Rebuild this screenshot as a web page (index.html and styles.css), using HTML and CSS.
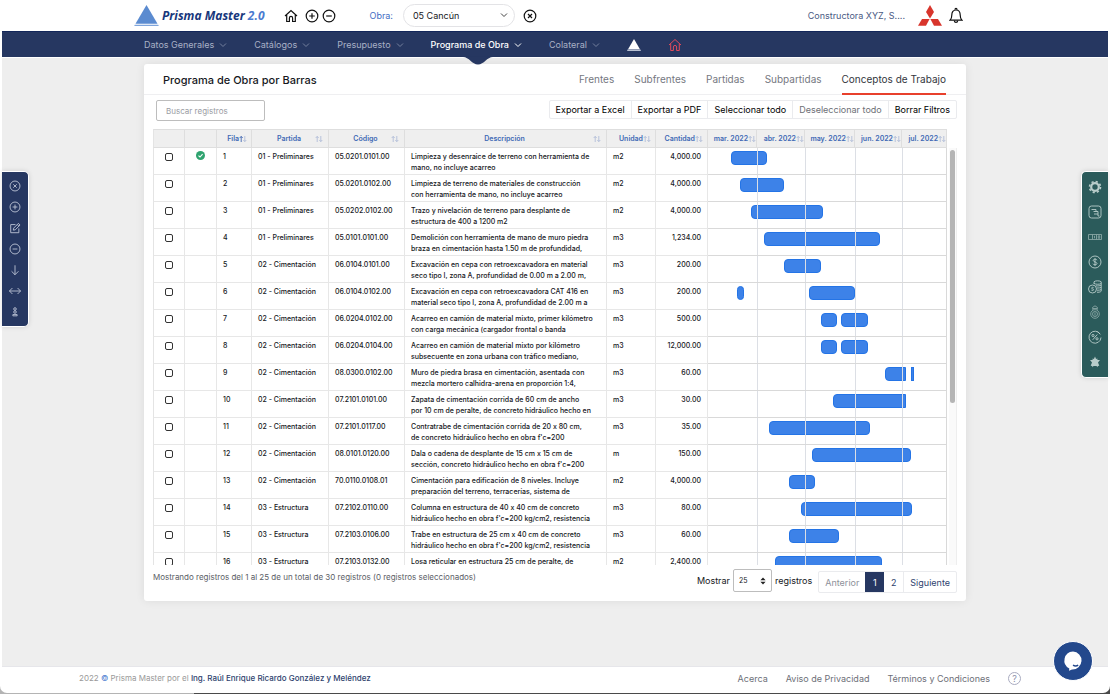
FILE: index.html
```html
<!DOCTYPE html>
<html lang="es">
<head>
<meta charset="utf-8">
<title>Prisma Master 2.0</title>
<link rel="stylesheet" href="styles.css">
</head>
<body>
<svg class="sprite" aria-hidden="true">
  <symbol id="chev" viewBox="0 0 8 8"><path d="M1 2.5 4 5.5 7 2.5"/></symbol>
  <symbol id="home" viewBox="0 0 14 14"><path d="M1 7 7 1.5 13 7M2.7 5.8V12.5H5.4V9a1.6 1.6 0 0 1 3.2 0v3.5h2.7V5.8"/></symbol>
  <symbol id="plus" viewBox="0 0 14 14"><circle cx="7" cy="7" r="5.8"/><path d="M4.2 7h5.6M7 4.2v5.6"/></symbol>
  <symbol id="minus" viewBox="0 0 14 14"><circle cx="7" cy="7" r="5.8"/><path d="M4.2 7h5.6"/></symbol>
  <symbol id="cross" viewBox="0 0 14 14"><circle cx="7" cy="7" r="5.8"/><path d="M5 5l4 4M9 5l-4 4"/></symbol>
  <symbol id="sort" viewBox="0 0 8 8"><path class="sort-up" d="M2.2 7V1.5M.7 3 2.2 1.4 3.7 3"/><path d="M5.8 1v5.5M4.3 5 5.8 6.6 7.3 5"/></symbol>
</svg>
<div class="app">
  <header class="top">
    <div class="container top-row">
      <a class="brand" href="#">
        <svg class="brand-mark" viewBox="0 0 25 22"><path d="M12.5 0 23.5 18.7h-22z" fill="#5b8bd0"/><path d="M.8 19.8h23.4l.6 1.3H.2z" fill="#7fa5dc"/></svg>
        <span>Prisma Master <em>2.0</em></span>
      </a>
      <div class="quick">
        <button class="icon-btn" aria-label="Inicio"><svg class="ic14"><use href="#home"/></svg></button>
        <button class="icon-btn" aria-label="Agregar"><svg class="ic14"><use href="#plus"/></svg></button>
        <button class="icon-btn" aria-label="Quitar"><svg class="ic14"><use href="#minus"/></svg></button>
      </div>
      <label class="obra-label" for="obra">Obra:</label>
      <div class="obra-select">
        <select id="obra"><option>05 Cancún</option></select>
        <svg class="ic8"><use href="#chev"/></svg>
      </div>
      <button class="icon-btn" aria-label="Cerrar obra"><svg class="ic14"><use href="#cross"/></svg></button>
      <span class="company">Constructora XYZ, S....</span>
      <svg class="company-mark" viewBox="0 0 24 21"><path d="M12 0l4 7-4 6.6L8 7z"/><path d="M4 14h7.6L8 20.8H0z"/><path d="M20 14h-7.600L16 20.800h8z"/></svg>
      <button class="icon-btn" aria-label="Notificaciones"><svg class="bell" viewBox="0 0 14 17"><path d="M1 13.200h12c-1.600-1.200-1.800-2.400-1.800-5.200C11.200 5 9.800 3 7 3S2.800 5 2.800 8c0 2.800-.2 4-1.800 5.200z"/><path d="M5.300 13.600c.2 2.400 3.200 2.400 3.400 0M6 2.800c0-2 2-2 2 0"/></svg></button>
    </div>
  </header>
  <nav class="menu" aria-label="Principal">
    <div class="container menu-row">
      <a href="#">Datos Generales <svg class="ic8"><use href="#chev"/></svg></a>
      <a href="#">Catálogos <svg class="ic8"><use href="#chev"/></svg></a>
      <a href="#">Presupuesto <svg class="ic8"><use href="#chev"/></svg></a>
      <a href="#" class="active">Programa de Obra <svg class="ic8"><use href="#chev"/></svg>
        <svg class="notch" viewBox="0 0 30 8"><path d="M0 0C6 0 9 7.500 15 7.500S24 0 30 0z"/></svg></a>
      <a href="#">Colateral <svg class="ic8"><use href="#chev"/></svg></a>
      <a href="#" aria-label="Prisma"><svg class="tri" viewBox="0 0 14 12"><path d="M7 0l5.800 10H1.200z" fill="#fff"/><path d="M.8 10.200h12.400L14 12H0z" fill="#b9c1d2"/></svg></a>
      <a href="#" class="red" aria-label="Portada"><svg class="ic14"><use href="#home"/></svg></a>
    </div>
  </nav>
  <main>
    <section class="card container">
      <div class="card-head">
        <h1>Programa de Obra por Barras</h1>
        <div class="tabs" role="tablist">
          <button role="tab">Frentes</button>
          <button role="tab">Subfrentes</button>
          <button role="tab">Partidas</button>
          <button role="tab">Subpartidas</button>
          <button role="tab" class="on" aria-selected="true">Conceptos de Trabajo</button>
        </div>
      </div>
      <div class="tools">
        <input class="search" type="text" placeholder="Buscar registros" aria-label="Buscar registros">
        <div class="group">
          <button>Exportar a Excel</button><button>Exportar a PDF</button><button>Seleccionar todo</button><button class="dim">Deseleccionar todo</button><button>Borrar Filtros</button>
        </div>
      </div>
      <div class="grid-wrap">
        <table>
          <colgroup><col class="c-tick"><col class="c-tick"><col class="c-row"><col class="c-part"><col class="c-code"><col><col class="c-unit"><col class="c-qty"><col class="m1"><col class="m2"><col class="m3"><col class="m4"><col class="m5"></colgroup>
          <thead><tr id="head"></tr></thead>
          <tbody id="rows"></tbody>
        </table>
        <div class="rail"><div class="thumb"></div></div>
      </div>
      <div class="card-foot">
        <p class="info">Mostrando registros del 1 al 25 de un total de 30 registros (0 registros seleccionados)</p>
        <div class="length">
          <label for="len">Mostrar</label>
          <span class="len-box"><select id="len"><option>25</option></select><svg viewBox="0 0 6 8"><path d="M3 .5 5.600 3.200H.4zM3 7.500.4 4.800h5.200z"/></svg></span>
          <span>registros</span>
        </div>
        <div class="pages">
          <button class="dim">Anterior</button><button class="cur">1</button><button class="num">2</button><button>Siguiente</button>
        </div>
      </div>
    </section>
  </main>
  <footer>
    <p>2022 <b>©</b> Prisma Master por el <a href="#">Ing. Raúl Enrique Ricardo González y Meléndez</a></p>
    <div class="links">
      <a href="#">Acerca</a><a href="#">Aviso de Privacidad</a><a href="#">Términos y Condiciones</a>
      <a href="#" class="help" aria-label="Ayuda">?</a>
    </div>
  </footer>
</div>
<aside class="dock left">
  <button aria-label="Cancelar"><svg viewBox="0 0 14 14"><use href="#cross"/></svg></button>
  <button aria-label="Nuevo"><svg viewBox="0 0 14 14"><use href="#plus"/></svg></button>
  <button aria-label="Editar"><svg viewBox="0 0 14 14"><path d="M7.500 3H2v9.500h9.500V7.500M5 9.500l.4-2.300L11 1.600l1.900 1.900-5.600 5.600zM9.700 3l1.800 1.800"/></svg></button>
  <button aria-label="Eliminar"><svg viewBox="0 0 14 14"><use href="#minus"/></svg></button>
  <button aria-label="Bajar"><svg viewBox="0 0 14 14"><path d="M7 1.500v11M3 8.500l4 4 4-4"/></svg></button>
  <button aria-label="Ancho"><svg viewBox="0 0 14 14"><path d="M.5 7h13M4 3.500.500 7 4 10.500M10 3.500 13.500 7 10 10.500"/></svg></button>
  <button aria-label="Agrupar"><svg viewBox="0 0 14 14"><circle cx="7" cy="3.500" r="1.500"/><circle cx="7" cy="7" r="1.500"/><path d="M4.500 11.500V10h5v1.500z"/></svg></button>
</aside>
<aside class="dock right">
  <button aria-label="Configuración"><svg viewBox="0 0 14 14"><circle cx="7" cy="7" r="3.800" stroke-width="2.200"/><circle cx="7" cy="7" r="5.500" stroke-width="1.600" stroke-dasharray="2.160 2.160"/></svg></button>
  <button aria-label="Programa"><svg viewBox="0 0 14 14"><rect x="1" y="1" width="12" height="12" rx="2.500"/><path d="M3.500 4.500H8v2h2v2.500M5.500 6.500H8M6 9h4v2h1.500"/></svg></button>
  <button aria-label="Billetes" class="faint"><svg viewBox="0 0 14 14"><path d="M.5 4.500h13v5H.5zM4.500 4.500v5M8.500 4.500v5M6.500 5.800v2.500M10.300 5.800h1.400v2.500h-1.400z"/></svg></button>
  <button aria-label="Costo"><svg viewBox="0 0 14 14"><circle cx="7" cy="7" r="6"/><path d="M9 5.200C8.600 3.700 5 3.800 5.200 5.500S9 6.800 9 8.500 5.300 10.300 5 8.700M7 3.200v7.600"/></svg></button>
  <button aria-label="Monedas"><svg viewBox="0 0 14 14"><circle cx="4.500" cy="9" r="4"/><path d="M5.600 7.800c-.5-.8-2.200-.5-2 .4s2 .6 2 1.500-1.500 1-2.200.4M6 4V1.800C7 .5 12 .5 13.200 1.800v9.400c-.8 1-3 1.200-4.200 1M6 3.500c2 1 5.500 1 7.200 0M8 5.800c2 .3 4 0 5.200-.6M9 8c1.600.1 3.200-.1 4.200-.6M9 10.200c1.600.1 3.200-.1 4.200-.6"/></svg></button>
  <button aria-label="Anticipo" class="faint"><svg viewBox="0 0 14 14"><circle cx="7" cy="9" r="4.300"/><circle cx="7" cy="9" r="2.500"/><path d="M5 5 4.500 2.500 7 .8l2.500 1.700L9 5M5 3.500h4M7 7.500v3"/></svg></button>
  <button aria-label="Porcentaje"><svg viewBox="0 0 14 14"><path d="M12.200 4.200A6 6 0 1 0 13 7.500M9.500 1.600l2.700 2.600"/><circle cx="5" cy="5.500" r="1.100"/><circle cx="9" cy="8.800" r="1.100"/><path d="M9.300 4.500l-4.600 5.300"/></svg></button>
  <button aria-label="Favorito"><svg viewBox="0 0 14 14"><path class="solid" d="M7 1.500l1.200 2.800 1-1 .3 1.600L12 5l-2 2.500 1.300 3.300-1.500.2-.3 1.300-1-1.300H5.500l-1 1.300-.3-1.300-1.500-.2L4 7.500 2 5l2.500-.1.300-1.600 1 1z"/></svg></button>
</aside>
<button class="chat" aria-label="Chat"><svg viewBox="0 0 20 20"><path fill="#fff" d="M10 .5a9 9 0 1 1-1 18l-3 1.300.3-2.300A9 9 0 0 1 10 .500z"/><path class="smile" d="M10 14.200c1.600.9 3.600.9 5.200 0"/></svg></button>
<script src="app.js"></script>
</body>
</html>
```
FILE: styles.css
```css
* { box-sizing: border-box; }
html { background: linear-gradient(to right, #b4b4b4 194px, #4a4a4a 194px); }
body { margin: 0; font-family: Inter, "Open Sans", sans-serif; font-variant-ligatures: no-contextual; font-size: 9px; color: #16181d; }
button, input, select { font: inherit; color: inherit; margin: 0; padding: 0; background: none; border: 0; appearance: none; }
a { color: inherit; text-decoration: none; }
p, h1 { margin: 0; }
svg { fill: none; stroke: currentColor; flex: none; display: block; }
.sprite { position: absolute; width: 0; height: 0; }
.sort-up { stroke: var(--up, currentColor); }
.ic14 { width: 14px; height: 14px; }
.ic8 { width: 8px; height: 8px; }
.app { display: flex; flex-direction: column; height: calc(100vh - 1px); padding: 0 2px; background: #fff; border-radius: 0 0 7px 7px; overflow: hidden; }
.container { width: 100%; max-width: 822px; margin: 0 auto; }

.top { height: 31px; flex: none; }
.top-row { display: flex; align-items: center; height: 100%; }
.brand { display: flex; align-items: center; gap: 3px; margin-left: -10px; font: italic 700 12px "Open Sans", sans-serif; color: #17377c; }
.brand em { color: #4a7bd0; }
.brand-mark { width: 25px; height: 22px; stroke: none; }
.quick { display: flex; gap: 3px; margin: 0 31px 0 19px; }
.quick .icon-btn:first-child { margin-right: 4px; }
.icon-btn { color: #111; }
.icon-btn svg { stroke-width: 1.2; }
.obra-label { color: #3f6fc4; }
.obra-select { position: relative; width: 112px; margin: 0 8px 0 10px; }
.obra-select select { width: 100%; height: 23px; padding: 0 9px; border: 1px solid #e3e3e6; border-radius: 12px; }
.obra-select svg { position: absolute; right: 7px; top: 7px; color: #444; }
.company { margin-left: auto; color: #4a5a83; }
.company-mark { width: 24px; height: 21px; margin: 0 7px 0 13px; fill: #d8352c; stroke: none; }
.bell { width: 14px; height: 17px; }
.top .icon-btn:last-child { margin-right: 3px; }

.menu { flex: none; height: 26px; background: #263761; border-top: 1px solid #12265a; color: #a9b1c6; }
.menu-row { display: flex; align-items: center; gap: 27px; height: 100%; }
.menu-row a { position: relative; display: flex; align-items: center; gap: 5px; height: 100%; }
.menu-row .ic8 { opacity: .6; }
.menu-row .active { color: #fff; font-weight: 500; }
.menu-row .active .ic8 { opacity: 1; }
.menu-row .red { color: #e04a5c; }
.menu .notch { position: absolute; z-index: 2; left: calc(50% - 13px); top: 100%; width: 30px; height: 8px; fill: #263761; stroke: none; }
.tri { width: 14px; height: 12px; stroke: none; }

main { flex: 1; min-height: 0; margin-top: 1px; padding-top: 6px; background: #eee; }
.card { background: #fff; border-radius: 3px; box-shadow: 0 0 10px #00000014; }
.card-head { display: flex; justify-content: space-between; height: 31px; padding: 0 20px 0 19px; border-bottom: 1px solid #efeff1; }
h1 { font-size: 11px; font-weight: 500; line-height: 32px; }
.tabs { display: flex; gap: 20px; font-size: 10px; color: #75787f; }
.tabs button { height: 31px; border-bottom: 2px solid transparent; }
.tabs .on { color: #33363d; border-color: #e8402c; }
.tools { display: flex; justify-content: space-between; align-items: flex-start; padding: 5px 9px 8px 12px; }
.search { width: 109px; height: 21px; padding: 0 9px; border: 1px solid #bdbdbd; border-radius: 2px; font-size: 8px; }
.search::placeholder { color: #9a9ca3; opacity: 1; }
.group, .pages { display: flex; border: 1px solid #eaebee; border-radius: 2px; }
.group button { height: 17px; padding: 0 6px; color: #000; }
.group button + button { border-left: 1px solid #eaebee; }
.group .dim { color: #6d6f76; }

.grid-wrap { display: grid; grid-template-columns: 1fr 10px; height: calc(100vh - 258px); margin: 0 9px; overflow: hidden; }
table { width: 100%; table-layout: fixed; border-collapse: separate; border-spacing: 0; font-size: 7px; font-weight: 500; line-height: 11px; align-self: start; }
.c-tick { width: 32px; }
.c-row { width: 35px; }
.c-part { width: 77px; }
.c-code { width: 76px; }
.c-unit { width: 49px; }
.c-qty { width: 52px; }
.m1 { width: 49px; }
.m2 { width: 48px; }
.m3 { width: 50px; }
.m4 { width: 47px; }
.m5 { width: 45px; }
th { height: 19px; padding: 0 0 0 4px; background: #efefef; border: 0 solid #dedede; border-width: 1px 1px 1px 0; color: #4069b5; font-weight: 600; }
th:first-child, td:first-child { border-left: 1px solid #e4e4e4; }
.th-in { display: flex; align-items: center; justify-content: flex-end; white-space: nowrap; }
.th-in svg { width: 8px; height: 8px; stroke-width: .8; color: #a9b8d6; }
.near { padding-right: 4px; }
.wide { padding-right: 5px; }
.wide .th-in span { flex: 1; padding-left: 7px; text-align: center; }
.sorted { --up: #2c57aa; }
td { height: 27px; padding: 3px 6px 1px; vertical-align: top; border: 0 solid #e7e7e7; border-width: 0 1px 1px 0; }
.desc { height: 22px; overflow: hidden; white-space: nowrap; }
.qty { text-align: right; }
.tick { text-align: center; }
.tick input { width: 8px; height: 8px; margin-top: 2px; border: 1px solid #333; border-radius: 2px; vertical-align: top; }
.ok { width: 9px; height: 9px; margin: 0 auto; stroke: none; }
.plan { position: relative; padding: 3px 0 0; border-color: #d9d9d9; }
.track { display: flex; height: 14px; margin-right: -1px; }
.bar { background: #3d82e8; border: 1px solid #2474e6; border-radius: 4px; flex: none; }
.bar.cut { border-top-right-radius: 0; border-bottom-right-radius: 0; }
.bar.thin { border-radius: 0; }
.marks { position: absolute; inset: 0 -1px 0 0; display: grid; grid-template-columns: 49fr 48fr 50fr 47fr 45fr; }
.marks i + i { border-left: 1px solid #dcdfe5; }
.rail { margin: 19px 0 0 2px; padding: 2px 1px; background: #fafafa; border-right: 1px solid #eee; }
.thumb { width: 5px; height: 61%; background: #b5b5b5; border-radius: 3px; }
.rail .thumb { height: 59%; }

.card-foot { display: flex; align-items: flex-start; padding: 4px 9px 8px; }
.info { margin-right: auto; line-height: 16px; font-size: 8px; color: #5b5e66; }
.length { display: flex; align-items: center; gap: 3px; }
.len-box { position: relative; }
.len-box select { width: 39px; height: 23px; padding: 0 5px; border: 1px solid #bdbdbd; border-radius: 2px; font-size: 7px; display: block; }
.len-box svg { position: absolute; right: 6px; top: 8px; width: 6px; height: 8px; fill: #222; stroke: none; }
.pages { margin: 2px 0 0 6px; color: #2e3f6e; }
.pages button { height: 20px; padding: 0 6px; }
.pages button:last-child { border-left: 1px solid #eaebee; }
.pages .dim { color: #8e9199; }
.pages .cur { width: 19px; background: #263761; color: #fff; }
.pages .num { width: 19px; }

footer { flex: none; display: flex; justify-content: space-between; align-items: center; height: 27px; padding: 0 87px 4px 77px; border-top: 1px solid #e6e6ea; color: #999; font-size: 8px; }
footer b { color: #4a7bd0; font-weight: 400; }
footer p a { color: #2e3f6e; font-weight: 500; }
.links { display: flex; align-items: center; gap: 18px; font-size: 9px; color: #6d6f78; }
.help { width: 13px; height: 13px; border: 1px solid #a9abc0; border-radius: 50%; text-align: center; line-height: 11px; color: #8d90aa; }

.dock { position: fixed; top: 171px; display: flex; flex-direction: column; border: 1px solid #fff; box-shadow: 0 0 5px #0002; }
.dock button { display: grid; place-items: center; width: 26px; }
.dock svg { width: 12px; height: 12px; }
.left { left: 2px; padding: 3px 0 4px; background: #263761; color: #c3cadb; border-left: 0; border-radius: 0 5px 5px 0; }
.left button { height: 21px; }
.right { right: 2px; padding: 2px 0 3px; background: #2b5b5b; color: #b9cdcb; border-right: 0; border-radius: 5px 0 0 5px; }
.right button { height: 25px; }
.right svg { width: 14px; height: 14px; stroke-width: .9; }
.solid { fill: currentColor; stroke: none; }
.faint svg { opacity: .65; }
.chat { position: fixed; right: 17px; bottom: 13px; display: grid; place-items: center; width: 40px; height: 40px; border: 1px solid #fff; border-radius: 50%; background: #23488c; }
.chat svg { width: 20px; height: 20px; stroke: none; }
.smile { stroke: #23488c; stroke-width: 1.5; }
```
FILE: app.js
```javascript
const SPAN = 239;
const heads = [
  ['', ''], ['', ''], ['Fila', 'near sorted'], ['Partida', 'wide'], ['Código', 'wide'], ['Descripción', 'wide'],
  ['Unidad', 'near'], ['Cantidad', 'near'], ['mar. 2022', ''], ['abr. 2022', ''], ['may. 2022', ''], ['jun. 2022', ''], ['jul. 2022', '']
];
const P = '01 - Preliminares', C = '02 - Cimentación', E = '03 - Estructura';
const rows = [
  [P, '05.0201.0101.00', 'Limpieza y desenraice de terreno con herramienta de<br>mano, no incluye acarreo', 'm2', '4,000.00', [[23, 59]]],
  [P, '05.0201.0102.00', 'Limpieza de terreno de materiales de construcción<br>con herramienta de mano, no incluye acarreo', 'm2', '4,000.00', [[32, 76]]],
  [P, '05.0202.0102.00', 'Trazo y nivelación de terreno para desplante de<br>estructura de 400 a 1200 m2', 'm2', '4,000.00', [[43, 115]]],
  [P, '05.0101.0101.00', 'Demolición con herramienta de mano de muro piedra<br>braza en cimentación hasta 1.50 m de profundidad,', 'm3', '1,234.00', [[56, 172]]],
  [C, '06.0104.0101.00', 'Excavación en cepa con retroexcavadora en material<br>seco tipo I, zona A, profundidad de 0.00 m a 2.00 m,', 'm3', '200.00', [[76, 113]]],
  [C, '06.0104.0102.00', 'Excavación en cepa con retroexcavadora CAT 416 en<br>material seco tipo I, zona A, profundidad de 2.00 m a', 'm3', '200.00', [[29, 36], [101, 147]]],
  [C, '06.0204.0102.00', 'Acarreo en camión de material mixto, primer kilómetro<br>con carga mecánica (cargador frontal o banda', 'm3', '500.00', [[113, 129], [133, 160]]],
  [C, '06.0204.0104.00', 'Acarreo en camión de material mixto por kilómetro<br>subsecuente en zona urbana con tráfico mediano,', 'm3', '12,000.00', [[113, 129], [133, 160]]],
  [C, '08.0300.0102.00', 'Muro de piedra brasa en cimentación, asentada con<br>mezcla mortero calhidra-arena en proporción 1:4,', 'm3', '60.00', [[177, 198, 'cut'], [203, 206, 'thin']]],
  [C, '07.2101.0101.00', 'Zapata de cimentación corrida de 60 cm de ancho<br>por 10 cm de peralte, de concreto hidráulico hecho en', 'm3', '30.00', [[125, 198, 'cut']]],
  [C, '07.2101.0117.00', "Contratrabe de cimentación corrida de 20 x 80 cm,<br>de concreto hidráulico hecho en obra f'c=200", 'm3', '35.00', [[61, 162]]],
  [C, '08.0101.0120.00', "Dala o cadena de desplante de 15 cm x 15 cm de<br>sección, concreto hidráulico hecho en obra f'c=200", 'm', '150.00', [[104, 203]]],
  [C, '70.0110.0108.01', 'Cimentación para edificación de 8 niveles. Incluye<br>preparación del terreno, terracerías, sistema de', 'm2', '4,000.00', [[81, 107]]],
  [E, '07.2102.0110.00', "Columna en estructura de 40 x 40 cm de concreto<br>hidráulico hecho en obra f'c=200 kg/cm2, resistencia", 'm3', '80.00', [[93, 204]]],
  [E, '07.2103.0106.00', "Trabe en estructura de 25 cm x 40 cm de concreto<br>hidráulico hecho en obra f'c=200 kg/cm2, resistencia", 'm3', '60.00', [[81, 131]]],
  [E, '07.2103.0132.00', 'Losa reticular en estructura 25 cm de peralte, de', 'm2', '2,400.00', [[67, 174]]]
];

document.getElementById('head').innerHTML = heads.map(([t, c]) =>
  `<th class="${c}"><div class="th-in">${t ? `<span>${t}</span><svg><use href="#sort"/></svg>` : ''}</div></th>`).join('');

const track = bars => {
  let at = 0;
  return bars.map(([a, b, kind = '']) => {
    const html = `<div class="bar ${kind}" style="margin-left:${(a - at) / SPAN * 100}%;width:${(b - a) / SPAN * 100}%"></div>`;
    at = b;
    return html;
  }).join('');
};
const check = '<svg class="ok" viewBox="0 0 9 9"><circle cx="4.5" cy="4.5" r="4.500" fill="#2fa36f"/><path d="M2.500 4.600 4 6l2.600-2.800" fill="none" stroke="#fff" stroke-width="1.100"/></svg>';

document.getElementById('rows').innerHTML = rows.map(([part, code, desc, unit, qty, bars], i) => `<tr>
  <td class="tick"><input type="checkbox" aria-label="Seleccionar fila ${i + 1}"></td>
  <td>${i ? '' : check}</td><td>${i + 1}</td><td>${part}</td><td>${code}</td>
  <td><div class="desc">${desc}</div></td><td>${unit}</td><td class="qty">${qty}</td>
  <td class="plan" colspan="5"><div class="track">${track(bars)}</div><div class="marks"><i></i><i></i><i></i><i></i><i></i></div></td>
</tr>`).join('');
```
